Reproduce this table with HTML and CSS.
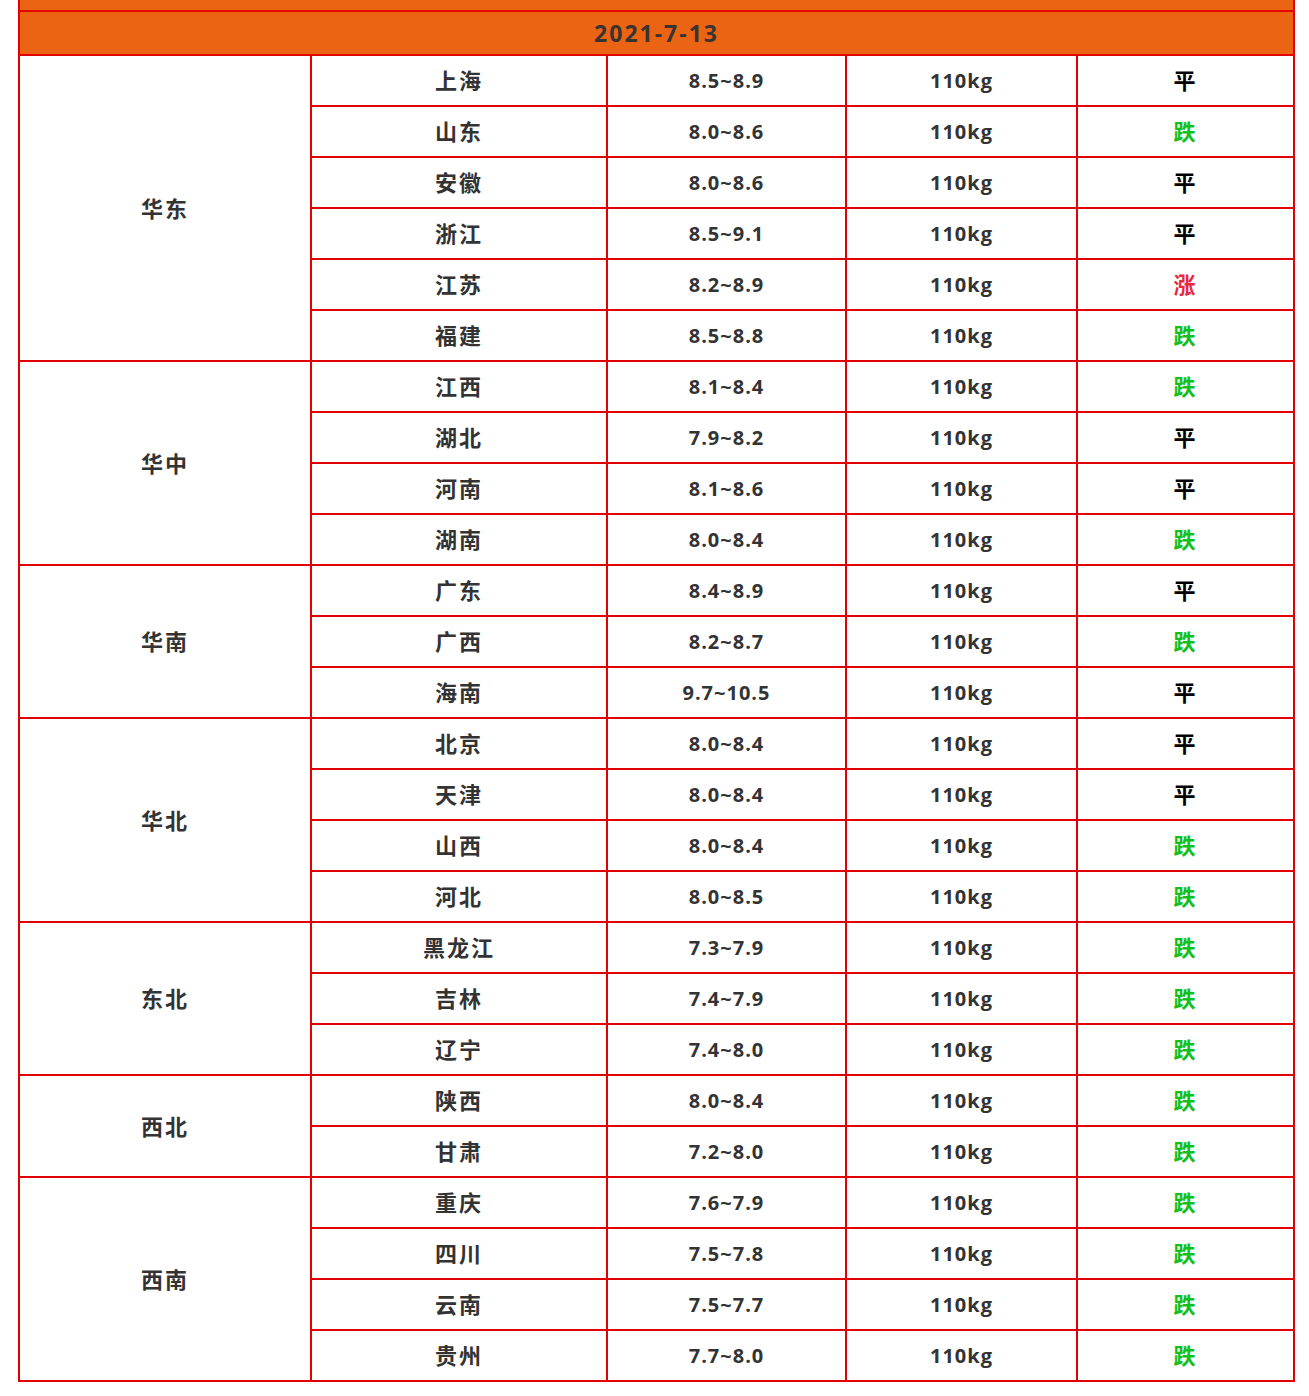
FILE: index.html
```html
<!DOCTYPE html>
<html lang="zh">
<head>
<meta charset="utf-8">
<title>猪价</title>
<link rel="stylesheet" href="styles.css">
</head>
<body>
<table class="price">
  <colgroup>
    <col class="c1"><col class="c2"><col class="c3"><col class="c4"><col class="c5">
  </colgroup>
  <tr class="top"><td colspan="5"><div class="stub"></div></td></tr>
  <tr class="date"><td colspan="5">2021-7-13</td></tr>
  <tr><td rowspan="6">华东</td><td>上海</td><td>8.5~8.9</td><td>110kg</td><td class="flat">平</td></tr>
  <tr><td>山东</td><td>8.0~8.6</td><td>110kg</td><td class="down">跌</td></tr>
  <tr><td>安徽</td><td>8.0~8.6</td><td>110kg</td><td class="flat">平</td></tr>
  <tr><td>浙江</td><td>8.5~9.1</td><td>110kg</td><td class="flat">平</td></tr>
  <tr><td>江苏</td><td>8.2~8.9</td><td>110kg</td><td class="up">涨</td></tr>
  <tr><td>福建</td><td>8.5~8.8</td><td>110kg</td><td class="down">跌</td></tr>
  <tr><td rowspan="4">华中</td><td>江西</td><td>8.1~8.4</td><td>110kg</td><td class="down">跌</td></tr>
  <tr><td>湖北</td><td>7.9~8.2</td><td>110kg</td><td class="flat">平</td></tr>
  <tr><td>河南</td><td>8.1~8.6</td><td>110kg</td><td class="flat">平</td></tr>
  <tr><td>湖南</td><td>8.0~8.4</td><td>110kg</td><td class="down">跌</td></tr>
  <tr><td rowspan="3">华南</td><td>广东</td><td>8.4~8.9</td><td>110kg</td><td class="flat">平</td></tr>
  <tr><td>广西</td><td>8.2~8.7</td><td>110kg</td><td class="down">跌</td></tr>
  <tr><td>海南</td><td>9.7~10.5</td><td>110kg</td><td class="flat">平</td></tr>
  <tr><td rowspan="4">华北</td><td>北京</td><td>8.0~8.4</td><td>110kg</td><td class="flat">平</td></tr>
  <tr><td>天津</td><td>8.0~8.4</td><td>110kg</td><td class="flat">平</td></tr>
  <tr><td>山西</td><td>8.0~8.4</td><td>110kg</td><td class="down">跌</td></tr>
  <tr><td>河北</td><td>8.0~8.5</td><td>110kg</td><td class="down">跌</td></tr>
  <tr><td rowspan="3">东北</td><td>黑龙江</td><td>7.3~7.9</td><td>110kg</td><td class="down">跌</td></tr>
  <tr><td>吉林</td><td>7.4~7.9</td><td>110kg</td><td class="down">跌</td></tr>
  <tr><td>辽宁</td><td>7.4~8.0</td><td>110kg</td><td class="down">跌</td></tr>
  <tr><td rowspan="2">西北</td><td>陕西</td><td>8.0~8.4</td><td>110kg</td><td class="down">跌</td></tr>
  <tr><td>甘肃</td><td>7.2~8.0</td><td>110kg</td><td class="down">跌</td></tr>
  <tr><td rowspan="4">西南</td><td>重庆</td><td>7.6~7.9</td><td>110kg</td><td class="down">跌</td></tr>
  <tr><td>四川</td><td>7.5~7.8</td><td>110kg</td><td class="down">跌</td></tr>
  <tr><td>云南</td><td>7.5~7.7</td><td>110kg</td><td class="down">跌</td></tr>
  <tr><td>贵州</td><td>7.7~8.0</td><td>110kg</td><td class="down">跌</td></tr>
</table>
</body>
</html>
```

FILE: styles.css
```css
html, body {
  margin: 0;
  padding: 0;
  background: #ffffff;
}

body {
  padding-left: 18px;
  font-family: "Open Sans", "Noto Sans CJK SC", sans-serif;
}

.price {
  border-collapse: collapse;
  width: 1277px;
  table-layout: fixed;
  border-top: none;
}

.c1 { width: 292px; }
.c2 { width: 296px; }
.c3 { width: 239px; }
.c4 { width: 231px; }
.c5 { width: 217px; }

.price td {
  border: 2px solid #e30000;
  padding: 0;
  height: 49px;
  line-height: 49px;
  text-align: center;
  vertical-align: middle;
  font-size: 20px;
  font-weight: 700;
  color: #333333;
  letter-spacing: 1px;
}

/* Chinese label cells: region, province, trend */
.price td:nth-last-child(n+4),
.price td:last-child {
  font-size: 22px;
  letter-spacing: 2px;
}

.price tr.top td {
  border-top: none;
  background: #ea6413;
  height: 10px;
  line-height: 10px;
}

.stub {
  height: 10px;
}

.price tr.date td {
  background: #ea6413;
  height: 42px;
  line-height: 42px;
  font-size: 23px;
  letter-spacing: 2px;
  color: #3a3330;
}

.price td.flat { color: #000000; }
.price td.down { color: #11c01c; }
.price td.up { color: #e8283c; }
```
